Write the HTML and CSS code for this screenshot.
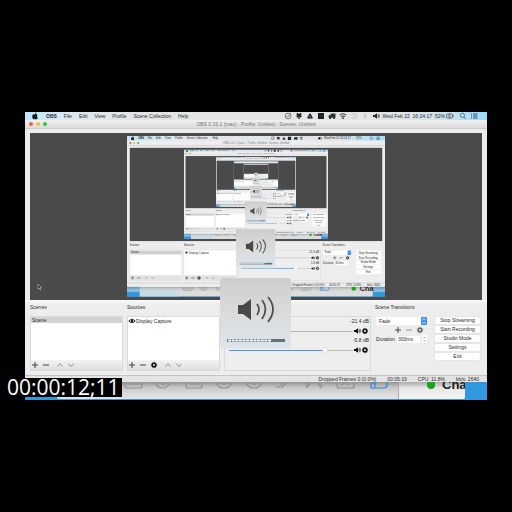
FILE: index.html
```
<!DOCTYPE html>
<html lang="en">
<head>
<meta charset="utf-8">
<title>OBS</title>
<link rel="stylesheet" href="styles.css">
</head>
<body>
<svg class="defs" aria-hidden="true">
  <defs>
    <linearGradient id="sky"><stop offset="0" stop-color="#bfe4f8"/><stop offset=".2" stop-color="#e2e8ec"/><stop offset=".8" stop-color="#e0e4e6"/><stop offset="1" stop-color="#a5dcf8"/></linearGradient>
    <linearGradient id="shade" x2="0" y2="1"><stop offset="0" stop-color="#8d8d8d"/><stop offset=".5" stop-color="#c9c9c9"/><stop offset="1" stop-color="#dcdcdc"/></linearGradient>
    <linearGradient id="glass" x2="0" y2="1"><stop offset="0" stop-color="#cdcdcd"/><stop offset=".45" stop-color="#dadada"/><stop offset="1" stop-color="#dce6ec"/></linearGradient>

    <symbol id="plus" viewBox="0 0 8 8"><path d="M4 1v6M1 4h6" stroke="#444" fill="none"/></symbol>
    <symbol id="minus" viewBox="0 0 8 8"><path d="M1 4h6" stroke="#444" fill="none"/></symbol>
    <symbol id="up" viewBox="0 0 8 8"><path d="M1.500 5.500L4 2.700L6.500 5.500" stroke="#777" fill="none" stroke-width=".8"/></symbol>
    <symbol id="down" viewBox="0 0 8 8"><path d="M1.500 2.700L4 5.500L6.500 2.700" stroke="#777" fill="none" stroke-width=".8"/></symbol>
    <symbol id="gear" viewBox="0 0 8 8"><circle cx="4" cy="4" r="1.800" fill="none" stroke="currentColor" stroke-width="1.500"/><circle cx="4" cy="4" r="2.700" fill="none" stroke="currentColor" stroke-width=".7" stroke-dasharray="1.200 .92"/></symbol>
    <symbol id="sound" viewBox="0 0 8 8"><path d="M1 3h1.500L5 1.300v5.400L2.500 5H1z" fill="currentColor"/><path d="M5.800 2.700q1 1.300 0 2.600M6.700 1.800q1.500 2.200 0 4.400" fill="none" stroke="currentColor" stroke-width=".7"/></symbol>
    <symbol id="eye" viewBox="0 0 8 8"><path d="M.8 4Q4 .6 7.200 4Q4 7.400 .8 4z" fill="none" stroke="#222"/><circle cx="4" cy="4" r="1.300" fill="#222"/></symbol>
    <symbol id="apple" viewBox="0 0 8 8"><path d="M4 2.500c1-.7 2-.5 2.600.2-1.100.8-.9 2.300.3 2.800C6.300 7 5.600 7.700 4.900 7.300q-.8-.4-1.600 0C2.300 7.700 1.200 6 1.200 4.400 1.200 2.400 2.800 1.900 4 2.500zM4 2q0-1.400 1.400-1.700Q5.500 1.700 4 2z" fill="#151d22"/></symbol>
    <symbol id="check" viewBox="0 0 8 8"><circle cx="4" cy="4" r="2.900" fill="none" stroke="#555" stroke-width=".7"/><path d="M2.500 4L3.700 5.200L6.500 1.500" fill="none" stroke="#555" stroke-width=".7"/></symbol>
    <symbol id="box" viewBox="0 0 8 8"><path d="M1 2L2.700 1L4 2L5.300 1L7 2L5.700 3.200L7 4.300L5.300 5.400L4 4.400L2.700 5.400L1 4.300L2.300 3.200zM2.500 6L4 5L5.500 6L4 7z" fill="#222"/></symbol>
    <symbol id="drive" viewBox="0 0 8 8"><path d="M4 2.200L6 5.800H2z" fill="none" stroke="#222" stroke-width="1.500" stroke-linejoin="round"/></symbol>
    <symbol id="tile" viewBox="0 0 8 8"><rect x="1" y="1" width="6" height="6" rx=".5" fill="#1b1f22"/><path d="M2 4h4" stroke="#4b5860" stroke-width=".6"/></symbol>
    <symbol id="truck" viewBox="0 0 8 8"><path d="M3 1.500h4.500v4.300H.6V4L1.500 2.700H3z" fill="#333"/><circle cx="2.200" cy="6" r="1" fill="#222"/><circle cx="6" cy="6" r="1" fill="#222"/></symbol>
    <symbol id="wifi" viewBox="0 0 8 8"><path d="M.8 3.200Q4 .4 7.200 3.200M2.200 4.800Q4 3.200 5.800 4.800" fill="none" stroke="#333" stroke-width="1.100"/><circle cx="4" cy="6.200" r=".9" fill="#333"/></symbol>
    <symbol id="clock" viewBox="0 0 8 8"><path d="M1.500 3A2.700 2.700 0 1 1 1.500 5.200M4 2.500V4H5.300" fill="none" stroke="#bbb" stroke-width=".7"/></symbol>
    <symbol id="tooth" viewBox="0 0 8 8"><path d="M2.500 2.500L5.300 5.300L4 6.700V1.300L5.300 2.700L2.500 5.500" fill="none" stroke="#bbb" stroke-width=".6"/></symbol>
    <symbol id="battery" viewBox="0 0 8 8"><rect x=".6" y="2" width="6" height="4" rx=".8" fill="none" stroke="#444" stroke-width=".7"/><path d="M4 1.500L2.500 4.200H4.500L3.500 6.500M7.400 3.300v1.400" fill="none" stroke="#444" stroke-width=".7"/></symbol>
    <symbol id="search" viewBox="0 0 8 8"><circle cx="3.400" cy="3.400" r="2.100" fill="none" stroke="#416176" stroke-width=".8"/><path d="M5 5L7 7" stroke="#416176" stroke-width=".8"/></symbol>
    <symbol id="list" viewBox="0 0 8 8"><path d="M1 2h1M3 2h4.500M1 4h1M3 4h4.500M1 6h1M3 6h4.500" stroke="#2c4d62" stroke-width="1"/></symbol>

    <symbol id="apps" viewBox="122 382 276 8">
      <g fill="none" stroke="#929292" stroke-width="1.200">
        <path d="M125 380v6q0 2 2 2h13q2 0 2-2v-6M125 384h17"/>
        <path d="M155 380q0 8 8 8 4 0 7-5M163 386q0-5 6-5M158 383h5"/>
        <path d="M186 380v6q0 2 2 2h12q2 0 2-2v-6M190 384h8"/>
        <path d="M216 380q0 8 8 8t8-8M220 382q4 4 8 0"/>
        <path d="M246 380q0 8 8 8t8-8M251 382l3 3 3-3"/>
        <path d="M276 386q2 3 6-2l5-5M281 388l8-7"/>
        <path d="M306 387q2-6 8-6t8 6M310 383l-3 5M318 383l3 5"/>
        <path d="M337 380v6q0 2 2 2h13q2 0 2-2v-6M341 385q4-3 8 0"/>
        <path d="M371 383h4v5h-4zM375 383l3-3M375 388h9q3 0 3-3v-5" stroke="#2f83dd"/>
      </g>
    </symbol>

    <symbol id="hud" viewBox="220 278 71 71">
      <rect x="220" y="278" width="71" height="71" rx="4" fill="url(#glass)"/>
      <path d="M238 305h5l8-6v21l-8-6h-5z" fill="#484848"/>
      <path d="M257 304q4 5 0 11M262 300q7 9 0 19M268 297q10 12 0 25" fill="none" stroke="#505050" stroke-width="1.800"/>
      <rect x="227" y="339" width="58" height="3" fill="#66737a"/>
      <path d="M228 340.500h43" stroke="#fff" stroke-width="2" stroke-dasharray="3 .64"/>
    </symbol>

    <!-- Captured desktop, drawn once and reused for each level of the feedback -->
    <symbol id="desk" viewBox="25 112 462 288">
      <rect x="25" y="112" width="462" height="288" fill="#3198df"/>
      <rect x="48" y="380" width="417" height="19" fill="#dcdcdc"/>
      <rect x="48" y="380" width="69" height="19" fill="#c3dce6"/>
      <rect x="25" y="382" width="462" height="9" fill="url(#shade)" opacity=".6"/>
      <use href="#apps" x="122" y="382" width="276" height="8"/>
      <circle cx="431" cy="385" r="4" fill="#19a51c"/>
      <text class="mini-name" x="442" y="389">Cha</text>
      <rect x="25" y="112" width="462" height="270" fill="#ededed"/>
      <rect x="25" y="112" width="462" height="8" fill="url(#sky)"/>
      <g class="mini">
        <use href="#apple" x="31" y="112" width="8" height="8"/>
        <text x="45" y="118" font-weight="bold">OBS</text><text x="62" y="118">File</text><text x="77" y="118">Edit</text><text x="93" y="118">View</text><text x="111" y="118">Profile</text><text x="132" y="118">Scene Collection</text><text x="178" y="118">Help</text>
        <use href="#check" x="282" y="112" width="8" height="8"/><use href="#box" x="292" y="112" width="8" height="8"/><use href="#drive" x="302" y="112" width="8" height="8"/><use href="#tile" x="312" y="112" width="8" height="8"/><use href="#truck" x="323" y="112" width="8" height="8"/><use href="#wifi" x="333" y="112" width="8" height="8"/><use href="#sound" x="366" y="112" width="8" height="8"/>
        <text x="378" y="118">Wed Feb 22  16:24:17</text><text x="435" y="118">52%</text>
        <use href="#search" x="459" y="112" width="8" height="8"/><use href="#list" x="470" y="112" width="8" height="8"/>
        <circle cx="31" cy="124.500" r="2" fill="#f25e57"/><circle cx="38" cy="124.500" r="2" fill="#f5be3b"/><circle cx="45" cy="124.500" r="2" fill="#2fc545"/>
        <text x="256" y="126" text-anchor="middle" fill="#777">OBS 0.15.1 (mac) - Profile: Untitled - Scenes: Untitled</text>
        <path d="M25 129h462" stroke="#c4c4c4"/>
        <rect x="30" y="133" width="452" height="167" fill="#4a4a4a"/>
        <text x="30" y="309">Scenes</text><text x="127" y="309">Sources</text><text x="375" y="309">Scene Transitions</text>
        <g fill="#fff" stroke="#c8c8c8" stroke-width=".5"><rect x="30" y="316" width="93" height="55"/><rect x="127" y="316" width="94" height="55"/><rect x="224" y="316" width="147" height="55" fill="#eee"/></g>
        <rect x="30" y="317" width="93" height="7" fill="#d0d0d0"/><text x="32" y="322">Scene</text>
        <path d="M30.500 361h92v10h-92zM127.500 361h93v10h-93z" fill="#e2e2e2"/>
        <use href="#plus" x="31" y="362" width="8" height="8"/><use href="#minus" x="42" y="362" width="8" height="8"/><use href="#up" x="56" y="362" width="8" height="8"/><use href="#down" x="67" y="362" width="8" height="8"/>
        <use href="#plus" x="128" y="362" width="8" height="8"/><use href="#minus" x="139" y="362" width="8" height="8"/><use href="#gear" x="150" y="362" width="8" height="8"/><use href="#up" x="164" y="362" width="8" height="8"/><use href="#down" x="175" y="362" width="8" height="8"/>
        <use href="#eye" x="128" y="317" width="7" height="7"/><text x="136" y="323">Display Capture</text>
        <text x="369" y="322" text-anchor="end">-21.4 dB</text><text x="369" y="341" text-anchor="end">-5.8 dB</text>
        <path d="M230 330h123M230 349h123" stroke="#b5b5b5"/><path d="M230 349h97" stroke="#3f98f6"/><circle cx="327" cy="349" r="3" fill="#fff"/>
        <use href="#sound" x="354" y="326" width="8" height="8"/><use href="#gear" x="362" y="326" width="8" height="8"/><use href="#sound" x="354" y="345" width="8" height="8"/><use href="#gear" x="362" y="345" width="8" height="8"/>
        <rect x="376" y="317" width="50" height="8" fill="#fff"/><rect x="420" y="317" width="6" height="8" rx="1" fill="#3a91f5"/><text x="379" y="322">Fade</text>
        <use href="#plus" x="393" y="326" width="8" height="8"/><use href="#minus" x="404" y="326" width="8" height="8"/><use href="#gear" x="416" y="326" width="8" height="8"/>
        <rect x="397" y="336" width="23" height="7" fill="#fff"/><text x="376" y="341">Duration</text><text x="398" y="341">300ms</text>
        <path d="M435 317h45v7h-45zM435 326h45v7h-45zM435 335h45v7h-45zM435 343h45v7h-45zM435 352h45v7h-45z" fill="#fff"/>
        <g text-anchor="middle"><text x="457" y="323">Stop Streaming</text><text x="457" y="332">Start Recording</text><text x="457" y="340">Studio Mode</text><text x="457" y="349">Settings</text><text x="457" y="358">Exit</text></g>
        <path d="M25 375h462" stroke="#c4c4c4"/>
        <text x="321" y="381">Dropped Frames 0 (0.0%)</text><text x="387" y="381">00:05:19</text><text x="417" y="381">CPU: 11.8%</text><text x="455" y="381">kb/s: 2640</text>
      </g>
    </symbol>
    <symbol id="level6" viewBox="25 112 462 288"><use href="#desk" x="25" y="112" width="462" height="288"/><use href="#hud" x="220" y="278" width="71" height="71"/></symbol>
    <symbol id="level5" viewBox="25 112 462 288"><use href="#desk" x="25" y="112" width="462" height="288"/><use href="#level6" x="127" y="136" width="258" height="161"/><use href="#hud" x="220" y="278" width="71" height="71"/></symbol>
    <symbol id="level4" viewBox="25 112 462 288"><use href="#desk" x="25" y="112" width="462" height="288"/><use href="#level5" x="127" y="136" width="258" height="161"/><use href="#hud" x="220" y="278" width="71" height="71"/></symbol>
    <symbol id="level3" viewBox="25 112 462 288"><use href="#desk" x="25" y="112" width="462" height="288"/><use href="#level4" x="127" y="136" width="258" height="161"/><use href="#hud" x="220" y="278" width="71" height="71"/></symbol>
    <symbol id="level2" viewBox="25 112 462 288"><use href="#desk" x="25" y="112" width="462" height="288"/><use href="#level3" x="127" y="136" width="258" height="161"/><use href="#hud" x="220" y="278" width="71" height="71"/></symbol>
  </defs>
</svg>

<main class="screen">
  <header class="menubar">
    <nav class="menus">
      <svg class="icon"><use href="#apple"/></svg>
      <a href="#" class="app">OBS</a><a href="#">File</a><a href="#">Edit</a><a href="#">View</a><a href="#">Profile</a><a href="#">Scene Collection</a><a href="#">Help</a>
    </nav>
    <div class="tray">
      <svg class="icon"><use href="#check"/></svg>
      <svg class="icon"><use href="#box"/></svg>
      <svg class="icon"><use href="#drive"/></svg>
      <svg class="icon"><use href="#tile"/></svg>
      <svg class="icon"><use href="#truck"/></svg>
      <svg class="icon"><use href="#wifi"/></svg>
      <svg class="icon"><use href="#clock"/></svg>
      <svg class="icon"><use href="#tooth"/></svg>
      <svg class="icon"><use href="#sound"/></svg>
      <span class="time">Wed Feb 22 &nbsp;16:24:17</span>
      <span class="power">52%<svg class="icon"><use href="#battery"/></svg></span>
      <svg class="icon"><use href="#search"/></svg>
      <svg class="icon"><use href="#list"/></svg>
    </div>
  </header>

  <section class="window">
    <div class="titlebar">
      <span class="lights"><i class="close"></i><i class="minimise"></i><i class="expand"></i></span>
      <h1>OBS 0.15.1 (mac) - Profile: Untitled - Scenes: Untitled</h1>
    </div>
    <svg class="preview" viewBox="30 133 452 167">
      <rect x="30" y="133" width="452" height="167" fill="#4a4a4a"/>
      <use href="#level2" x="127" y="136" width="258" height="161"/>
      <path d="M38 284v5l1.200-1 1 2 .8-.4-1-2h1.500z" fill="#222" stroke="#ddd" stroke-width=".5"/>
    </svg>

    <div class="docks">
      <section class="dock">
        <h2>Scenes</h2>
        <div class="panel">
          <ul><li class="selected">Scene</li></ul>
          <div class="tools">
            <button aria-label="Add scene"><svg class="icon"><use href="#plus"/></svg></button>
            <button aria-label="Remove scene"><svg class="icon"><use href="#minus"/></svg></button>
            <button class="apart" aria-label="Move scene up"><svg class="icon"><use href="#up"/></svg></button>
            <button aria-label="Move scene down"><svg class="icon"><use href="#down"/></svg></button>
          </div>
        </div>
      </section>
      <section class="dock">
        <h2>Sources</h2>
        <div class="panel">
          <ul><li><svg class="icon"><use href="#eye"/></svg>Display Capture</li></ul>
          <div class="tools">
            <button aria-label="Add source"><svg class="icon"><use href="#plus"/></svg></button>
            <button aria-label="Remove source"><svg class="icon"><use href="#minus"/></svg></button>
            <button aria-label="Source properties"><svg class="icon"><use href="#gear"/></svg></button>
            <button class="apart" aria-label="Move source up"><svg class="icon"><use href="#up"/></svg></button>
            <button aria-label="Move source down"><svg class="icon"><use href="#down"/></svg></button>
          </div>
        </div>
      </section>
      <section class="dock mixer">
        <div class="panel">
          <p>-21.4 dB</p>
          <div class="channel">
            <input class="idle" type="range" min="0" max="100" value="0" aria-label="Desktop volume">
            <button aria-label="Mute desktop"><svg class="icon"><use href="#sound"/></svg></button>
            <button aria-label="Desktop audio settings"><svg class="icon"><use href="#gear"/></svg></button>
          </div>
          <p>-5.8 dB</p>
          <div class="channel">
            <input type="range" min="0" max="100" value="79" aria-label="Microphone volume">
            <button aria-label="Mute microphone"><svg class="icon"><use href="#sound"/></svg></button>
            <button aria-label="Microphone audio settings"><svg class="icon"><use href="#gear"/></svg></button>
          </div>
        </div>
      </section>
      <section class="dock">
        <h2>Scene Transitions</h2>
        <div class="transition">
          <div class="pick">
            <select aria-label="Transition"><option>Fade</option></select>
            <svg class="arrows" viewBox="0 0 6 8"><path d="M1.500 3L3 1.500L4.500 3M1.500 5L3 6.500L4.500 5" fill="none" stroke="#fff" stroke-width=".8"/></svg>
          </div>
          <div class="edit">
            <button aria-label="Add transition"><svg class="icon"><use href="#plus"/></svg></button>
            <button aria-label="Remove transition" class="faint"><svg class="icon"><use href="#minus"/></svg></button>
            <button aria-label="Transition properties" class="grey"><svg class="icon"><use href="#gear"/></svg></button>
          </div>
          <div class="duration">
            <label for="duration">Duration</label>
            <input id="duration" type="text" value="300ms">
            <svg class="stepper" viewBox="0 0 5 8"><rect width="5" height="8" rx="1" fill="#fff"/><path d="M1.500 3L2.500 2L3.500 3M1.500 5L2.500 6L3.500 5" fill="none" stroke="#666" stroke-width=".6"/></svg>
          </div>
        </div>
      </section>
      <section class="dock controls">
        <div class="actions">
          <button>Stop Streaming</button>
          <button>Start Recording</button>
          <button>Studio Mode</button>
          <button>Settings</button>
          <button>Exit</button>
        </div>
      </section>
    </div>
    <footer class="status">
      <span>Dropped Frames 0 (0.0%)</span><span>00:05:19</span><span>CPU: 11.8%</span><span>kb/s: 2640</span>
    </footer>
  </section>

  <div class="behind">
    <div class="sheet">
      <svg class="apps" viewBox="0 0 276 8"><use href="#apps" width="276" height="8"/></svg>
      <div class="chat"><i></i><span>Cha</span></div>
    </div>
  </div>

  <svg class="hud" viewBox="0 0 71 71" role="img" aria-label="Volume"><use href="#hud" width="71" height="71"/></svg>
  <div class="timecode">00:00:12;11</div>
</main>
</body>
</html>
```
FILE: styles.css
```
* { box-sizing: border-box; }

body {
  margin: 0;
  background: #000;
  color: #2b2b2b;
  font: 5px/8px "Liberation Sans", Arial, sans-serif;
}

h1, h2, p, ul { margin: 0; padding: 0; font-size: inherit; font-weight: normal; }
ul { list-style: none; }
a { color: inherit; text-decoration: none; }

button, input, select {
  margin: 0;
  padding: 0;
  border: 0;
  background: none;
  color: inherit;
  font: inherit;
  appearance: none;
}

button { display: flex; align-items: center; justify-content: center; }

.defs { position: absolute; width: 0; height: 0; }
.icon { display: block; flex: none; width: 8px; height: 8px; }

.mini { font: 5px "Liberation Sans", Arial, sans-serif; fill: #2b2b2b; color: #111; }
.mini-name { font: bold 13px "Liberation Sans", Arial, sans-serif; fill: #222; }

.screen { position: relative; margin: 112px 25px; }

.menubar {
  display: flex;
  justify-content: space-between;
  height: 8px;
  padding: 0 9px 0 6px;
  background: linear-gradient(90deg, #bfe6fb, #dde9ef 10%, #e2e4e5 25%, #e2e4e5 80%, #c9e2ef 92%, #9bdafb);
}

.menus { display: flex; gap: 7px; }
.app { font-weight: bold; }
.tray { display: flex; gap: 3px; white-space: nowrap; }
.power { display: flex; gap: 1px; margin-right: 2px; }

.window { background: #ededed; }

.titlebar {
  display: flex;
  align-items: center;
  height: 9px;
  padding: 0 4px;
  margin-bottom: 4px;
  background: linear-gradient(#f0f0f0, #dcdcdc);
  border-bottom: 1px solid #cfcfcf;
  color: #777;
}

.titlebar h1 { flex: 1; margin-right: 18px; text-align: center; }
.lights { display: flex; gap: 3px; }
.lights i { width: 4px; height: 4px; border-radius: 50%; }
.close { background: #f25e57; }
.minimise { background: #f5be3b; }
.expand { background: #2fc545; }

.preview { display: block; width: calc(100% - 10px); margin: 0 5px; }

.docks {
  display: grid;
  grid-template-columns: minmax(0, 93fr) minmax(0, 93fr) minmax(0, 147fr) minmax(0, 54fr) minmax(0, 47fr);
  gap: 4px;
  padding: 3px 7px 4px 5px;
  background: linear-gradient(#fafafa, #ededed 5px);
}

.dock h2 { margin-bottom: 5px; }
.mixer, .controls { padding-top: 13px; }

.panel {
  display: flex;
  flex-direction: column;
  height: 55px;
  border: 1px solid #dadada;
  background: #fff;
}

.panel ul { flex: 1; }
.panel li { display: flex; align-items: center; height: 8px; }
.panel .selected { height: 6px; padding-left: 1px; background: #d2d2d2; }

.tools {
  display: flex;
  align-items: center;
  gap: 3px;
  height: 10px;
  background: linear-gradient(#f3f3f3, #dedede);
  color: #111;
}

.apart { margin-left: 3px; }

.mixer .panel { padding-right: 1px; background: #eee; }
.mixer p { line-height: 9px; text-align: right; }
.channel { display: flex; align-items: center; height: 10px; padding-left: 4px; color: #111; }

.channel input {
  flex: 1;
  min-width: 0;
  height: 6px;
  background: linear-gradient(90deg, #3f98f6 79%, #bdbdbd 79%) center / 100% 1px no-repeat;
}

.channel input::-webkit-slider-thumb {
  appearance: none;
  width: 6px;
  height: 6px;
  border: 1px solid #ddd;
  border-radius: 50%;
  background: #fff;
}

.channel .idle { background-image: linear-gradient(#b5b5b5, #b5b5b5); }
.channel .idle::-webkit-slider-thumb { opacity: 0; }

.transition { display: flex; flex-direction: column; padding: 1px 2px 0 1px; }
.pick { display: flex; height: 8px; background: #fff; border-radius: 1px; }
.pick select { flex: 1; min-width: 0; padding-left: 3px; }
.arrows { width: 6px; height: 8px; border-radius: 1px; background: #3a91f5; }
.edit { display: flex; justify-content: flex-end; gap: 3px; height: 9px; padding-right: 3px; }
.faint { opacity: .5; }
.grey { color: #666; }
.duration { display: flex; align-items: center; gap: 2px; margin-top: 1px; }
.duration input { flex: 1; min-width: 0; height: 7px; padding-left: 1px; background: #fff; }
.stepper { width: 5px; height: 8px; }

.actions {
  display: flex;
  flex-direction: column;
  justify-content: space-between;
  height: 44px;
  padding: 1px 0 0 2px;
}

.actions button {
  height: 7px;
  border-radius: 1px;
  background: #fff;
  box-shadow: 0 0 1px #aaa;
  line-height: 7px;
}

.status {
  display: flex;
  justify-content: flex-end;
  gap: 11px;
  height: 7px;
  padding-right: 8px;
  border-top: 1px solid #c4c4c4;
  background: #e4e4e4;
  line-height: 7px;
}

.behind { height: 18px; padding: 0 22px 1px 32px; background: #3198df; }

.sheet {
  display: grid;
  grid-template-columns: minmax(0, 276fr) minmax(0, 67fr);
  height: 17px;
  padding-left: 65px;
  overflow: hidden;
  border-radius: 0 0 2px 2px;
  background: linear-gradient(#919191, #c4c4c4 5px, #dcdcdc 12px, #e3e3e3);
}

.apps { display: block; width: 100%; }

.chat {
  display: flex;
  gap: 7px;
  padding-left: 28px;
  border-left: 1px solid #aaa;
  background: linear-gradient(#aaa, #e8e8e8 6px, #f3f3f3);
  color: #222;
  font-size: 13px;
  font-weight: bold;
  line-height: 5px;
}

.chat i { flex: none; width: 8px; height: 7px; border-radius: 0 0 4px 4px; background: #19a51c; }

.hud { position: absolute; top: 166px; left: 195px; width: 71px; height: 71px; }

.timecode {
  position: absolute;
  top: 266px;
  left: -18px;
  padding-right: 2px;
  background: #000;
  color: #fff;
  font: 21px/19px "Open Sans", "Noto Sans", sans-serif;
}
```
